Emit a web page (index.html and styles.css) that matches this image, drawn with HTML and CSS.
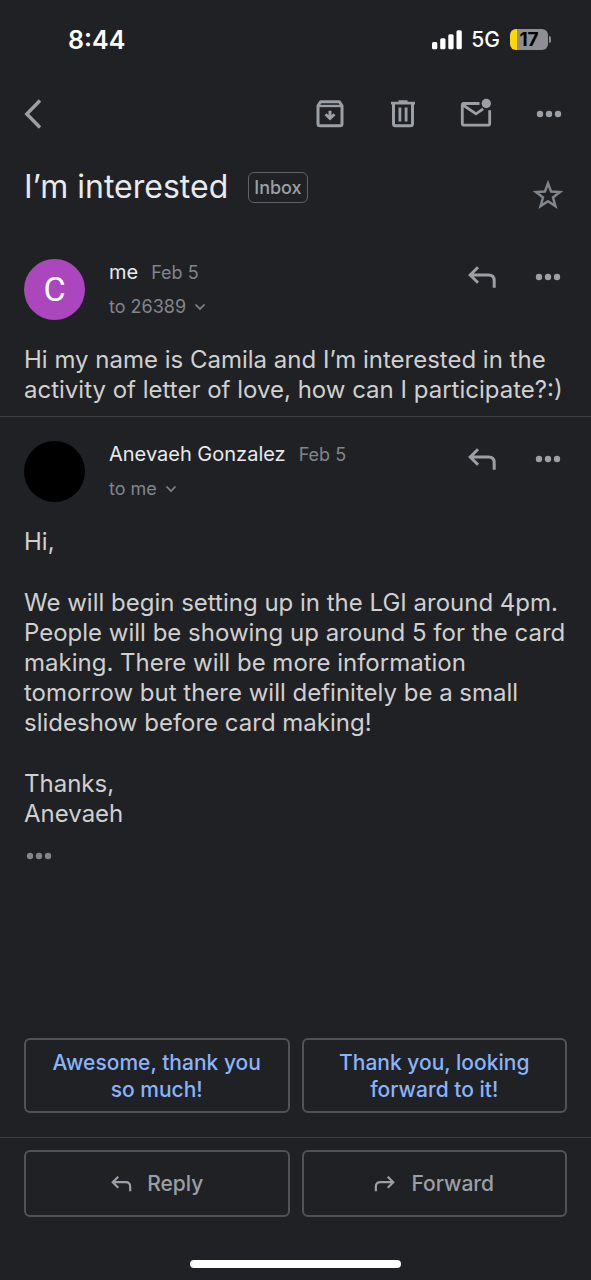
FILE: index.html
```html
<!DOCTYPE html>
<html lang="en">
<head>
<meta charset="utf-8">
<meta name="viewport" content="width=device-width, initial-scale=1">
<title>I’m interested</title>
<link rel="stylesheet" href="styles.css">
</head>
<body>
<svg class="sprite" aria-hidden="true">
  <symbol id="dots" viewBox="0 0 32 32"><g fill="currentColor"><circle cx="7" cy="16" r="3.2"/><circle cx="16" cy="16" r="3.2"/><circle cx="25" cy="16" r="3.2"/></g></symbol>
  <symbol id="reply" viewBox="0 0 32 32"><path d="M12 6.200 4.200 14l7.800 7.800M4.500 14h18q5.700 0 5.700 5.700v7" fill="none" stroke="currentColor" stroke-width="3"/></symbol>
  <symbol id="chevron" viewBox="0 0 12 12"><path d="M1.500 3.500 6 8l4.500-4.500" fill="none" stroke="currentColor" stroke-width="1.700"/></symbol>
</svg>
<div class="screen">
  <header class="status">
    <time class="clock">8:44</time>
    <div class="indicators">
      <svg class="signal" viewBox="0 0 30 20" aria-label="Signal"><g fill="#fff"><rect x="0" y="12" width="5.300" height="7.300" rx="1.500"/><rect x="8.200" y="8.300" width="5.300" height="11" rx="1.500"/><rect x="16.300" y="4.300" width="5.300" height="15" rx="1.500"/><rect x="24.500" y="0.300" width="5.300" height="19" rx="1.500"/></g></svg>
      <span class="network">5G</span>
      <div class="battery"><span class="cell">17</span><span class="tip"></span></div>
    </div>
  </header>

  <nav class="toolbar">
    <button class="icon-btn back" aria-label="Back"><svg viewBox="0 0 32 32"><path d="M24 2.500 10.800 16 24 29.500" fill="none" stroke="currentColor" stroke-width="3.400"/></svg></button>
    <button class="icon-btn" aria-label="Archive"><svg viewBox="0 0 32 32"><path d="M6.600 3.700h18.800l2.600 4v18q0 2-2 2H6q-2 0-2-2v-18z" fill="none" stroke="currentColor" stroke-width="3" stroke-linejoin="round"/><path d="M4 8h24" stroke="currentColor" stroke-width="2.400"/><path d="M14.500 12.800h3v4.400l2-2 2 2L16 22.600l-5.500-5.400 2-2 2 2z" fill="currentColor"/></svg></button>
    <button class="icon-btn" aria-label="Delete"><svg viewBox="0 0 32 32"><path d="M4 5.200h24M11.500 3.600h9" fill="none" stroke="currentColor" stroke-width="2.800"/><path d="M6.500 5v20.700q0 2 2 2h15q2 0 2-2V5" fill="none" stroke="currentColor" stroke-width="3"/><path d="M12.900 9.500v14M19.100 9.500v14" stroke="currentColor" stroke-width="2.800"/></svg></button>
    <button class="icon-btn" aria-label="Mark as unread"><svg viewBox="0 0 32 32"><path d="M19.500 5.500H4q-1.700 0-1.700 1.700v18.300q0 1.700 1.700 1.700h24q1.700 0 1.700-1.700V12.300M3 7l13 8.800 7.200-5" fill="none" stroke="currentColor" stroke-width="2.800"/><circle cx="26.300" cy="5.500" r="4.700" fill="currentColor"/></svg></button>
    <button class="icon-btn" aria-label="More options"><svg><use href="#dots"/></svg></button>
  </nav>

  <main class="thread">
    <div class="subject">
      <h1>I’m interested</h1>
      <span class="label">Inbox</span>
      <button class="icon-btn star" aria-label="Star"><svg viewBox="0 0 32 32"><path d="m16 4.400 3.100 8.200 8.800.4-6.900 5.500 2.400 8.600-7.400-4.900-7.400 4.900 2.400-8.600L4.100 13l8.800-.4z" fill="none" stroke="currentColor" stroke-width="2.500"/></svg></button>
    </div>

    <article class="message">
      <div class="message-head">
        <span class="avatar initial">C</span>
        <div class="who">
          <div class="from"><span class="name">me</span><time class="date">Feb 5</time></div>
          <button class="to">to 26389 <svg><use href="#chevron"/></svg></button>
        </div>
        <button class="icon-btn" aria-label="Reply"><svg><use href="#reply"/></svg></button>
        <button class="icon-btn" aria-label="Message options"><svg><use href="#dots"/></svg></button>
      </div>
      <div class="text"><p>Hi my name is Camila and I’m interested in the activity of letter of love, how can I participate?:)</p></div>
    </article>

    <article class="message">
      <div class="message-head">
        <span class="avatar"></span>
        <div class="who">
          <div class="from"><span class="name">Anevaeh Gonzalez</span><time class="date">Feb 5</time></div>
          <button class="to">to me <svg><use href="#chevron"/></svg></button>
        </div>
        <button class="icon-btn" aria-label="Reply"><svg><use href="#reply"/></svg></button>
        <button class="icon-btn" aria-label="Message options"><svg><use href="#dots"/></svg></button>
      </div>
      <div class="text">
        <p>Hi,</p>
        <p>We will begin setting up in the LGI around 4pm. People will be showing up around 5 for the card making. There will be more information tomorrow but there will definitely be a small slideshow before card making!</p>
        <p>Thanks,<br>Anevaeh</p>
      </div>
      <button class="icon-btn quoted" aria-label="Show quoted text"><svg><use href="#dots"/></svg></button>
    </article>
  </main>

  <div class="pair suggestions">
    <button class="choice">Awesome, thank you<br>so much!</button>
    <button class="choice">Thank you, looking<br>forward to it!</button>
  </div>
  <footer class="pair actions">
    <button class="action"><svg viewBox="0 0 24 24"><path d="M9 4 3 10l6 6M3 10h14q5 0 5 5v5" fill="none" stroke="currentColor" stroke-width="2.400"/></svg>Reply</button>
    <button class="action"><svg viewBox="0 0 24 24"><path d="m15 4 6 6-6 6M21 10H7q-5 0-5 5v5" fill="none" stroke="currentColor" stroke-width="2.400"/></svg>Forward</button>
  </footer>
  <div class="home"></div>
</div>
</body>
</html>
```
FILE: styles.css
```css
* { box-sizing: border-box; }

body {
  margin: 0;
  background: #202125;
  color: #d0d0d0;
  font-family: Inter, "Liberation Sans", sans-serif;
}

button {
  margin: 0;
  padding: 0;
  border: 0;
  background: none;
  color: inherit;
  font: inherit;
}

h1, p { margin: 0; }

svg { display: block; }

.sprite { display: none; }

.screen {
  display: flex;
  flex-direction: column;
  min-height: 100vh;
}

.status {
  display: flex;
  justify-content: space-between;
  align-items: center;
  height: 79px;
  padding: 0 40px 0 68px;
  color: #fff;
}

.clock {
  font-size: 25px;
  font-weight: 600;
}

.indicators {
  display: flex;
  align-items: center;
}

.signal {
  width: 30px;
  height: 20px;
  margin-right: 9px;
}

.network {
  margin-right: 10px;
  font-size: 21px;
  font-weight: 500;
}

.battery {
  display: flex;
  align-items: center;
  gap: 1px;
}

.cell {
  width: 38px;
  border-radius: 6px;
  background: linear-gradient(to right, #ffd60a 7px, #8e8e93 7px);
  color: #000;
  font-size: 19px;
  font-weight: 700;
  line-height: 21px;
  text-align: center;
}

.tip {
  width: 2px;
  height: 7px;
  border-radius: 0 2px 2px 0;
  background: #8e8e93;
}

.toolbar {
  display: flex;
  align-items: center;
  gap: 41px;
  height: 69px;
  padding: 0 26px 0 16px;
}

.icon-btn {
  flex: none;
  width: 32px;
  height: 32px;
  color: #9aa0a6;
}

.icon-btn svg {
  width: 32px;
  height: 32px;
}

.back { margin-right: auto; }

.thread { flex: 1; }

.subject {
  display: flex;
  align-items: flex-start;
  padding: 18px 27px 0 24px;
}

.subject h1 {
  color: #e8eaed;
  font-size: 32px;
  font-weight: 400;
  line-height: 42px;
}

.label {
  margin: 6px auto 0 20px;
  padding: 0 5px;
  border: 1px solid #5f6368;
  border-radius: 6px;
  color: #9aa0a6;
  font-size: 18px;
  font-weight: 500;
  line-height: 29px;
}

.star {
  margin-top: 13px;
  color: #80868b;
}

.message { padding-top: 24px; }

.subject + .message { padding-top: 48px; }

.message + .message { border-top: 1px solid #3c4043; }

.message-head {
  display: flex;
  align-items: flex-start;
  padding: 0 27px 0 24px;
}

.message-head .icon-btn { margin-top: 2px; }

.message-head .icon-btn + .icon-btn { margin-left: 34px; }

.avatar {
  flex: none;
  width: 61px;
  height: 61px;
  border-radius: 50%;
  background: #000;
}

.initial {
  background: #ab47bc;
  color: #fff;
  font-family: Roboto, sans-serif;
  font-size: 34px;
  font-weight: 400;
  line-height: 61px;
  text-align: center;
}

.who {
  flex: 1;
  margin-left: 24px;
}

.from {
  display: flex;
  align-items: baseline;
  gap: 13px;
  line-height: 26px;
}

.name {
  color: #e8eaed;
  font-size: 20px;
}

.date, .to {
  color: #80868b;
  font-size: 18px;
}

.to {
  display: flex;
  align-items: center;
  gap: 8px;
  margin-top: 8px;
  line-height: 26px;
}

.to svg {
  width: 12px;
  height: 12px;
}

.text {
  display: grid;
  gap: 31px;
  padding: 25px 24px 11px;
  font-size: 24px;
  line-height: 30px;
}

.quoted {
  display: block;
  margin-left: 23px;
  color: #80868b;
}

.pair {
  display: grid;
  grid-template-columns: 1fr 1fr;
  gap: 12px;
  padding: 0 24px;
}

.pair button {
  border: 2px solid #505357;
  border-radius: 6px;
}

.suggestions { padding-bottom: 24px; }

.choice {
  height: 75px;
  color: #8ab4f8;
  font-size: 21px;
  font-weight: 500;
  line-height: 27px;
}

.actions {
  padding-top: 12px;
  border-top: 1px solid #3c4043;
}

.action {
  display: flex;
  justify-content: center;
  align-items: center;
  gap: 15px;
  height: 67px;
  color: #9aa0a6;
  font-size: 21px;
  font-weight: 500;
}

.action svg {
  width: 22px;
  height: 22px;
}

.home {
  width: 211px;
  height: 8px;
  margin: 43px auto 12px;
  border-radius: 4px;
  background: #fff;
}
```
